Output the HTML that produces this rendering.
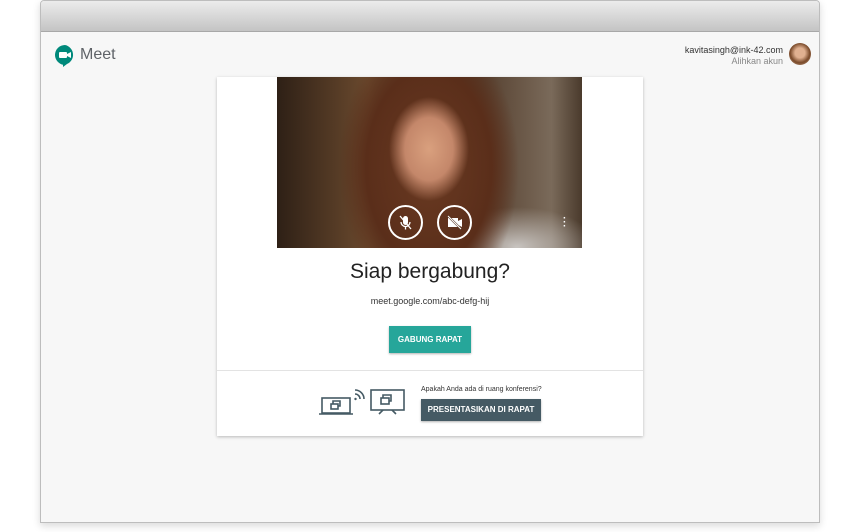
<!DOCTYPE html>
<html><head><style>
*{margin:0;padding:0;box-sizing:border-box}
body{width:860px;height:532px;background:#fff;font-family:"Liberation Sans",sans-serif;position:relative;overflow:hidden}
.win{position:absolute;left:40px;top:0;width:780px;height:523px;border:1px solid #bdbdbd;border-radius:4px 4px 0 0;background:#f7f7f7;box-shadow:0 3px 8px rgba(0,0,0,.15);overflow:hidden}
.bar{height:31px;background:linear-gradient(#ececec,#c4c4c4);border-bottom:1px solid #a8a8a8}
.card{position:absolute;left:217px;top:77px;width:426px;height:359px;background:#fff;box-shadow:0 1px 3px rgba(0,0,0,.25)}
.video{position:absolute;left:60px;top:0;width:305px;height:171px;overflow:hidden;background:
radial-gradient(ellipse 40px 52px at 152px 72px,#d9a07e 0%,#c4876a 60%,rgba(150,90,60,0) 100%),
radial-gradient(ellipse 90px 140px at 152px 90px,#6a3a22 0%,#5a2e1a 70%,rgba(60,40,30,0) 100%),
radial-gradient(ellipse 80px 40px at 240px 170px,#c8c4c0 0%,rgba(180,175,170,0) 100%),
linear-gradient(90deg,#2e2016,#6b4a2e 30%,#4a3322 60%,#7a6a5a 90%,#4a3a2c)}
.circ{position:absolute;top:128px;width:35px;height:35px;border:2px solid #fff;border-radius:50%}
</style></head><body>
<div class="win"><div class="bar"></div>
<svg style="position:absolute;left:13px;top:43px" width="22" height="24" viewBox="0 0 22 24"><path d="M11 1a10 10 0 0 0-10 10c0 5 4 9 8 9.8V23l4-3a10 10 0 0 0-2-19z" fill="#00897b"/><rect x="5" y="8" width="8" height="6" rx="1" fill="#fff"/><path d="M13 10l4-2v6l-4-2z" fill="#fff"/></svg>
<div style="position:absolute;left:39px;top:45px;font-size:16px;color:#5f6368">Meet</div>
<div style="position:absolute;right:36px;top:44px;text-align:right;font-size:9px;color:#333;line-height:11px">kavitasingh@ink-42.com<br><span style="color:#888">Alihkan akun</span></div>
<div style="position:absolute;right:8px;top:42px;width:22px;height:22px;border-radius:50%;background:radial-gradient(circle at 50% 45%,#e0b090 30%,#7a4a2a 60%,#c9a890)"></div>
</div>
<div class="card">
<div class="video">
<div class="circ" style="left:111px"><svg width="31" height="31" viewBox="0 0 31 31"><rect x="13" y="9" width="5" height="9" rx="2.5" fill="#fff"/><path d="M11 15a4.5 4.5 0 0 0 9 0M15.5 19.5v3M10 9l11 13" stroke="#fff" stroke-width="1.3" fill="none"/></svg></div>
<div class="circ" style="left:160px"><svg width="31" height="31" viewBox="0 0 31 31"><rect x="9" y="11" width="10" height="9" fill="#fff"/><path d="M19 14l4-2v8l-4-2z" fill="#fff"/><path d="M9 9l13 13" stroke="#5a3a26" stroke-width="2"/><path d="M9 9l13 13" stroke="#fff" stroke-width="1"/></svg></div>
<div style="position:absolute;left:286px;top:140px;color:#fff;font-size:10px;line-height:4px;font-weight:bold">·<br>·<br>·</div>
</div>
<div style="position:absolute;left:0;width:426px;top:183px;text-align:center;font-size:21px;color:#222">Siap bergabung?</div>
<div style="position:absolute;left:0;width:426px;top:219px;text-align:center;font-size:9px;color:#333">meet.google.com/abc-defg-hij</div>
<div style="position:absolute;left:172px;top:249px;width:82px;height:27px;background:#26a69a;color:#fff;font-size:8px;font-weight:bold;text-align:center;line-height:27px;box-shadow:0 1px 2px rgba(0,0,0,.3)">GABUNG RAPAT</div>
<div style="position:absolute;left:0;top:293px;width:426px;border-top:1px solid #e3e3e3"></div>
<svg style="position:absolute;left:102px;top:312px" width="88" height="30" viewBox="0 0 88 30"><g stroke="#455a64" stroke-width="1.6" fill="none"><rect x="3" y="9" width="28" height="15"/><path d="M0 25h34"/><rect x="12" y="15" width="7" height="5"/><path d="M14 15v-3h7v5h-2"/><path d="M36 5a5 5 0 0 1 5 5M36 1a9 9 0 0 1 9 9"/><rect x="52" y="1" width="33" height="20"/><rect x="62" y="9" width="8" height="6"/><path d="M64 9v-3h8v6h-2M60 25l4-4M77 25l-4-4"/></g><circle cx="36.5" cy="10" r="1.2" fill="#455a64"/></svg>
<div style="position:absolute;left:204px;top:309px;font-size:7px;color:#333">Apakah Anda ada di ruang konferensi?</div>
<div style="position:absolute;left:204px;top:322px;width:120px;height:22px;background:#455a64;color:#fff;font-size:8px;font-weight:bold;text-align:center;line-height:22px;box-shadow:0 1px 2px rgba(0,0,0,.3)">PRESENTASIKAN DI RAPAT</div>
</div>
</body></html>
